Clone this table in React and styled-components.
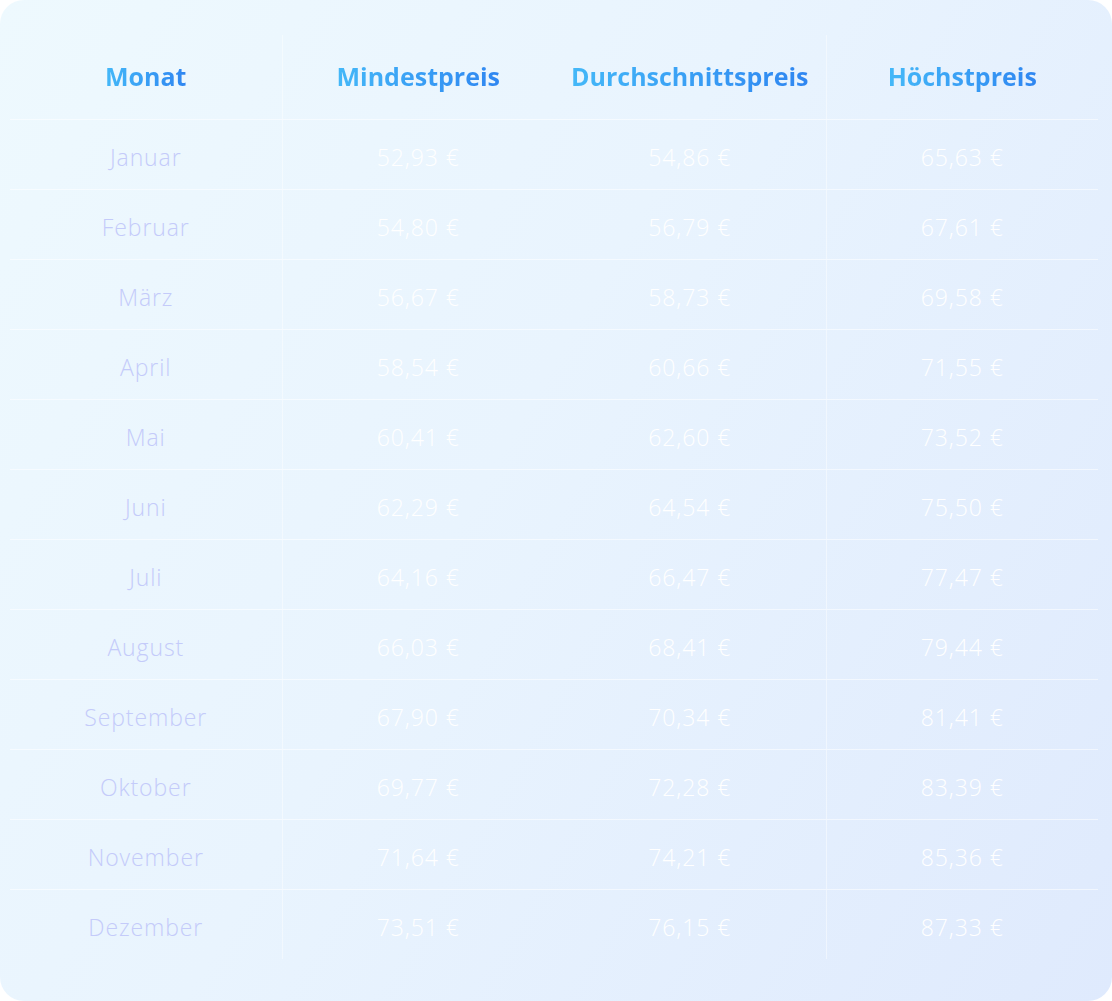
import React from 'react'
import styled, { createGlobalStyle } from 'styled-components'

const GlobalStyle = createGlobalStyle`
	html, body {
		margin: 0;
		padding: 0;
		background: #ffffff;
	}
	body {
		font-family: 'Open Sans', 'Liberation Sans', sans-serif;
	}
`

const Card = styled.div`
	box-sizing: border-box;
	width: 1112px;
	height: 1001px;
	border-radius: 24px;
	padding: 35px 14px 0 10px;
	background: linear-gradient(120deg, #eef9fe 0%, #e9f4fe 45%, #dfeafd 100%);
	overflow: hidden;
`

const Table = styled.table`
	width: 100%;
	border-collapse: collapse;
	table-layout: fixed;
`

const HeadCell = styled.th`
	height: 82px;
	padding: 0 0 2px;
	text-align: center;
	font-size: 25px;
	line-height: 30px;
	font-weight: 700;
	border-bottom: 1px solid rgba(255, 255, 255, 0.55);
	border-left: ${(p) => (p.$divider ? '1px solid rgba(255, 255, 255, 0.45)' : 'none')};
`

const HeadText = styled.span`
	background: linear-gradient(90deg, #44b8f8 0%, #2f86f1 100%);
	-webkit-background-clip: text;
	background-clip: text;
	color: transparent;
`

const Cell = styled.td`
	height: 65px;
	padding: 4px 0 0;
	text-align: center;
	font-size: 23px;
	line-height: 28px;
	font-weight: 300;
	letter-spacing: 0.9px;
	color: ${(p) => (p.$month ? '#c4cbfa' : '#ffffff')};
	border-bottom: ${(p) => (p.$last ? 'none' : '1px solid rgba(255, 255, 255, 0.55)')};
	border-left: ${(p) => (p.$divider ? '1px solid rgba(255, 255, 255, 0.45)' : 'none')};
`

const rows = [
	['Januar', '52,93 €', '54,86 €', '65,63 €'],
	['Februar', '54,80 €', '56,79 €', '67,61 €'],
	['März', '56,67 €', '58,73 €', '69,58 €'],
	['April', '58,54 €', '60,66 €', '71,55 €'],
	['Mai', '60,41 €', '62,60 €', '73,52 €'],
	['Juni', '62,29 €', '64,54 €', '75,50 €'],
	['Juli', '64,16 €', '66,47 €', '77,47 €'],
	['August', '66,03 €', '68,41 €', '79,44 €'],
	['September', '67,90 €', '70,34 €', '81,41 €'],
	['Oktober', '69,77 €', '72,28 €', '83,39 €'],
	['November', '71,64 €', '74,21 €', '85,36 €'],
	['Dezember', '73,51 €', '76,15 €', '87,33 €'],
]

const headers = ['Monat', 'Mindestpreis', 'Durchschnittspreis', 'Höchstpreis']

const App = () => {
	return (
		<>
			<GlobalStyle />
			<Card>
				<Table>
					<thead>
						<tr>
							{headers.map((h, i) => (
								<HeadCell key={h} $divider={i === 1 || i === 3}>
									<HeadText>{h}</HeadText>
								</HeadCell>
							))}
						</tr>
					</thead>
					<tbody>
						{rows.map((row, r) => (
							<tr key={row[0]}>
								{row.map((val, i) => (
									<Cell
										key={i}
										$month={i === 0}
										$divider={i === 1 || i === 3}
										$last={r === rows.length - 1}
									>
										{val}
									</Cell>
								))}
							</tr>
						))}
					</tbody>
				</Table>
			</Card>
		</>
	)
}

export default App
